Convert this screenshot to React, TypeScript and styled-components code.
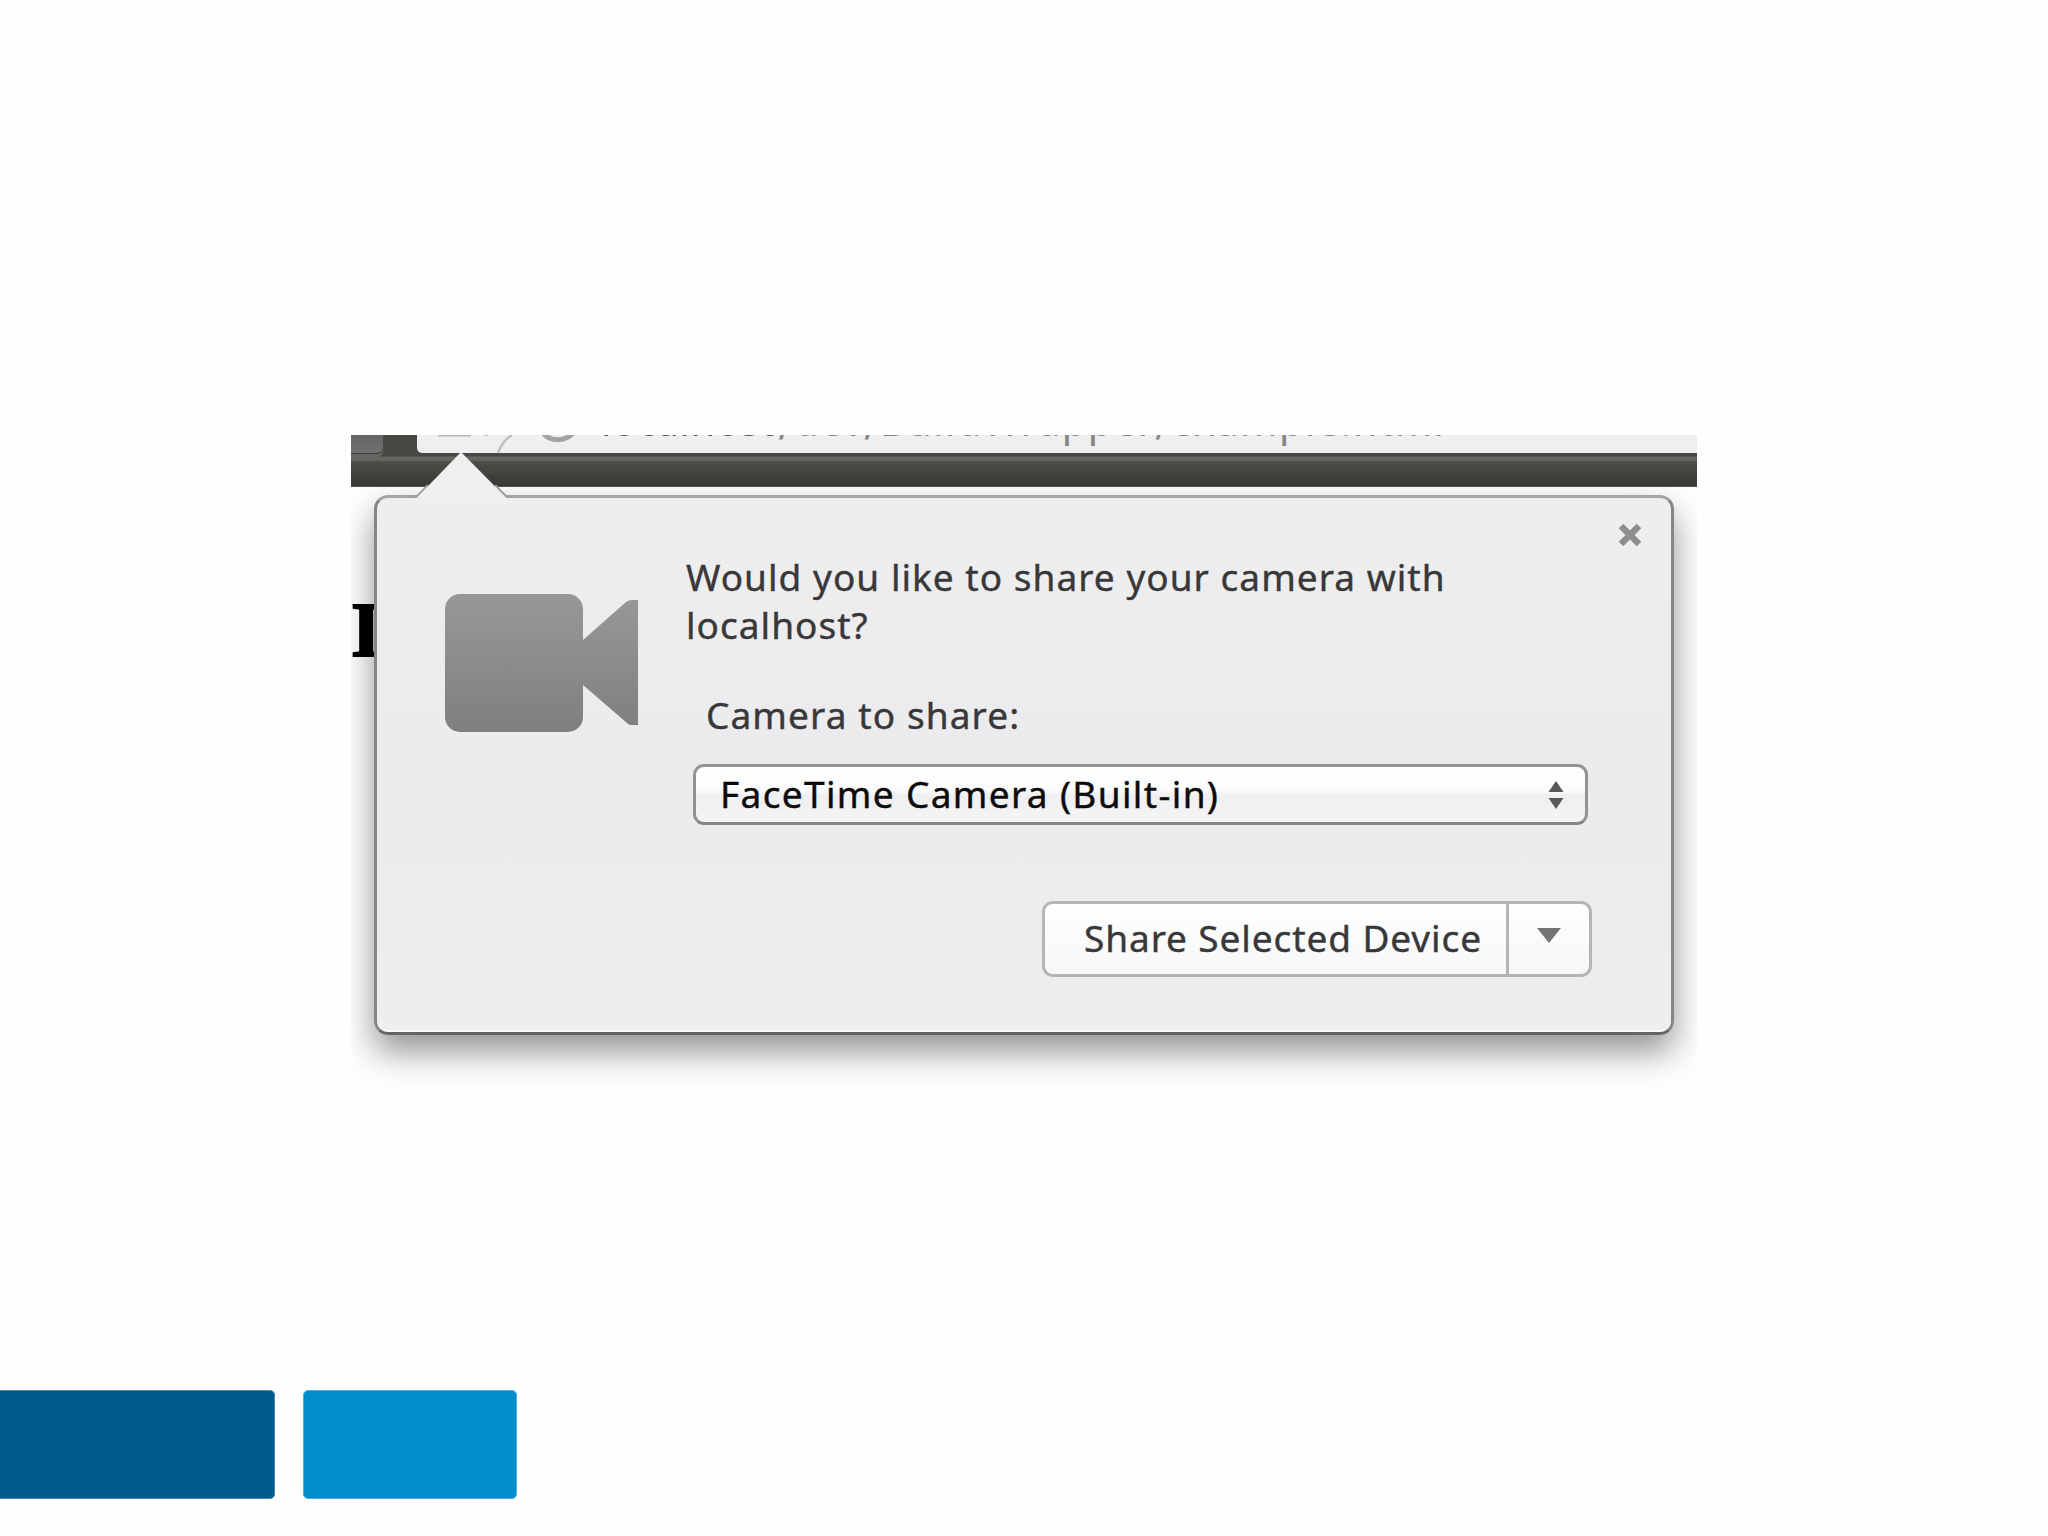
import styled, { createGlobalStyle } from 'styled-components';

const GlobalStyle = createGlobalStyle`
	* {
		box-sizing: border-box;
	}

	body {
		margin: 0;
		background: #fefefe;
		font-family: 'Noto Sans', 'Open Sans', sans-serif;
	}
`;

const Page = styled.div`
	display: flex;
	flex-direction: column;
	width: 2048px;
	height: 1536px;
	padding-top: 435px;
	overflow: hidden;
`;

const Browser = styled.section`
	position: relative;
	flex: none;
	width: 1346px;
	height: 665px;
	margin-left: 351px;
	overflow: hidden;
`;

const Toolbar = styled.header`
	display: flex;
	gap: 34px;
	height: 52px;
	background: linear-gradient(#474743 0 21px, #65665f 22px 25px, #4d4c47 27px, #3b3935 51px, #6d6c69 52px);
`;

const TabButton = styled.div`
	width: 32px;
	height: 19px;
	background: linear-gradient(#646464, #6f6f6f);
	border-bottom: 1px solid #3c3c3a;
	border-bottom-right-radius: 6px;
	box-shadow: 0 3px 0 #65665f;
`;

const AddressBar = styled.div`
	flex: 1;
	display: flex;
	align-items: flex-start;
	height: 18px;
	overflow: hidden;
	background: #eeefee;
	border-bottom-left-radius: 5px;
`;

const AddressIcons = styled.svg`
	flex: none;
	width: 184px;
	height: 18px;
`;

const AddressPart = styled.span<{ $color: string; $width: number; $spacing: number }>`
	flex: none;
	width: ${({ $width }) => $width}px;
	margin-top: -34px;
	font-size: 40px;
	line-height: 40px;
	letter-spacing: ${({ $spacing }) => $spacing}px;
	white-space: nowrap;
	color: ${({ $color }) => $color};
`;

const Slash = styled.span`
	font-family: 'DejaVu Sans', sans-serif;
	line-height: 0;
`;

const Heading = styled.h1`
	margin: 99px 0 0;
	font-family: 'Liberation Serif', serif;
	font-size: 78px;
	line-height: 88px;
	-webkit-text-stroke: 2px #000;
	color: #000;
`;

const Popup = styled.div`
	position: absolute;
	left: 23px;
	top: 60px;
	display: flex;
	width: 1300px;
	height: 540px;
	padding: 55px 77px 0 68px;
	background: linear-gradient(#efeeef, #ebeaec 55%, #eeedef);
	border: 3px solid;
	border-color: #a6a5a6 #868586 #666466;
	border-radius: 14px;
	box-shadow: 0 17px 34px rgba(0, 0, 0, 0.42), inset 0 -2px 0 #fafafa;
`;

const Arrow = styled.svg`
	position: absolute;
	left: 36px;
	top: -49px;
	width: 100px;
	height: 53px;
`;

const CloseButton = styled.button`
	position: absolute;
	right: 27px;
	top: 22px;
	width: 28px;
	height: 30px;
	padding: 0;
	border: 0;
	background: none;

	svg {
		display: block;
	}
`;

const CameraIcon = styled.svg`
	flex: none;
	width: 193px;
	height: 138px;
	margin: 41px 48px 0 0;
`;

const Body = styled.div`
	flex: none;
	display: flex;
	flex-direction: column;
	width: 906px;
`;

const Text = styled.p<{ $spacing?: number }>`
	margin: 0;
	font-size: 37px;
	line-height: 48px;
	letter-spacing: ${({ $spacing = 1 }) => $spacing}px;
	-webkit-text-stroke: 0.4px;
	white-space: nowrap;
	color: #38383a;
`;

const Label = styled(Text)`
	margin: 42px 0 0 20px;
`;

const Select = styled.div`
	display: flex;
	align-items: center;
	justify-content: space-between;
	width: 895px;
	height: 61px;
	margin: 25px 0 0 7px;
	padding: 0 21px 0 24px;
	background: linear-gradient(#fff 0%, #fbfbfb 42%, #efeef0 52%, #f5f4f6 100%);
	border: 3px solid #949394;
	border-bottom-color: #868586;
	border-radius: 11px;

	${Text} {
		padding-bottom: 2px;
		color: #0c0c0c;
	}
`;

const ButtonGroup = styled.div`
	display: flex;
	align-self: flex-end;
	width: 550px;
	height: 76px;
	margin-top: 76px;
	background: linear-gradient(#fefefe, #f7f7f8);
	border: 3px solid #b6b5b6;
	border-radius: 11px;
`;

const ShareButton = styled.div`
	flex: 1;
	padding: 10px 0 0 39px;
	border-right: 3px solid #b6b5b6;
`;

const MenuButton = styled.div`
	display: flex;
	justify-content: center;
	width: 80px;
	padding-top: 24px;
`;

const Swatches = styled.footer`
	display: flex;
	gap: 28px;
	margin-top: 290px;
`;

const Swatch = styled.div<{ $color: string; $edge: string; $width: number; $flush?: boolean }>`
	width: ${({ $width }) => $width}px;
	height: 109px;
	background: ${({ $color }) => $color};
	border: 1px solid ${({ $edge }) => $edge};
	border-left-width: ${({ $flush }) => ($flush ? 0 : 1)}px;
	border-radius: ${({ $flush }) => ($flush ? '0 5px 5px 0' : '5px')};
`;

const App = () => {
	return (
		<Page>
			<GlobalStyle />
			<Browser>
				<Toolbar>
					<TabButton />
					<AddressBar>
						<AddressIcons viewBox="0 0 184 18" fill="none">
							<path d="M21 0.5h33" stroke="#b4b5b4" strokeWidth="2" />
							<path d="M67 0h4" stroke="#c4c4c4" strokeWidth="2" />
							<path d="M81 18C84 10 88 4 95 0" stroke="#bcbdbc" strokeWidth="2.5" />
							<path d="M126 -2C133 7 148 7 156 -2" stroke="#a2a3a2" strokeWidth="5" />
						</AddressIcons>
						<AddressPart $color="#555" $width={178} $spacing={0.6}>
							localhost
						</AddressPart>
						<AddressPart $color="#858585" $width={700} $spacing={1.4}>
							<Slash>/</Slash>dev<Slash>/</Slash>BuildWrapper<Slash>/</Slash>example.html
						</AddressPart>
					</AddressBar>
				</Toolbar>
				<Heading>I</Heading>
				<Popup>
					<Arrow viewBox="0 0 100 53" fill="none">
						<path d="M0 47.5H4L15 36.5M98 47.5H93L82 36.5" stroke="#a09fa0" strokeWidth="2.5" />
						<path d="M3.5 49 48 3 93.5 49V53H3.5Z" fill="#efefef" />
					</Arrow>
					<CloseButton aria-label="Close">
						<svg width="28" height="30" viewBox="0 0 28 30">
							<path d="M5 6 23 24M23 6 5 24" stroke="#8f8e8f" strokeWidth="6.5" />
						</svg>
					</CloseButton>
					<CameraIcon viewBox="0 0 193 138">
						<defs>
							<linearGradient id="camera" x1="0" y1="0" x2="0" y2="138" gradientUnits="userSpaceOnUse">
								<stop offset="0" stopColor="#999899" />
								<stop offset="1" stopColor="#807e7f" />
							</linearGradient>
						</defs>
						<rect width="138" height="138" rx="15" fill="url(#camera)" />
						<path d="M138 46 181 8Q184 6 187 6H193V131H186Q184 131 182 129L138 91Z" fill="url(#camera)" />
					</CameraIcon>
					<Body>
						<Text $spacing={1.03}>
							Would you like to share your camera with
							<br />
							localhost?
						</Text>
						<Label $spacing={1.1}>Camera to share:</Label>
						<Select>
							<Text $spacing={1.35}>FaceTime Camera (Built-in)</Text>
							<svg width="16" height="30" viewBox="0 0 16 30">
								<path d="M8 1 15.5 12H.5ZM8 29 .5 18H15.5Z" fill="#59585a" />
							</svg>
						</Select>
						<ButtonGroup>
							<ShareButton>
								<Text $spacing={0.9}>Share Selected Device</Text>
							</ShareButton>
							<MenuButton>
								<svg width="24" height="15" viewBox="0 0 24 15">
									<path d="M0 0H24L12 15Z" fill="#747374" />
								</svg>
							</MenuButton>
						</ButtonGroup>
					</Body>
				</Popup>
			</Browser>
			<Swatches>
				<Swatch $color="#00598c" $edge="#4a88ab" $width={275} $flush />
				<Swatch $color="#008dcd" $edge="#4fb0dc" $width={214} />
			</Swatches>
		</Page>
	);
};

export default App;
